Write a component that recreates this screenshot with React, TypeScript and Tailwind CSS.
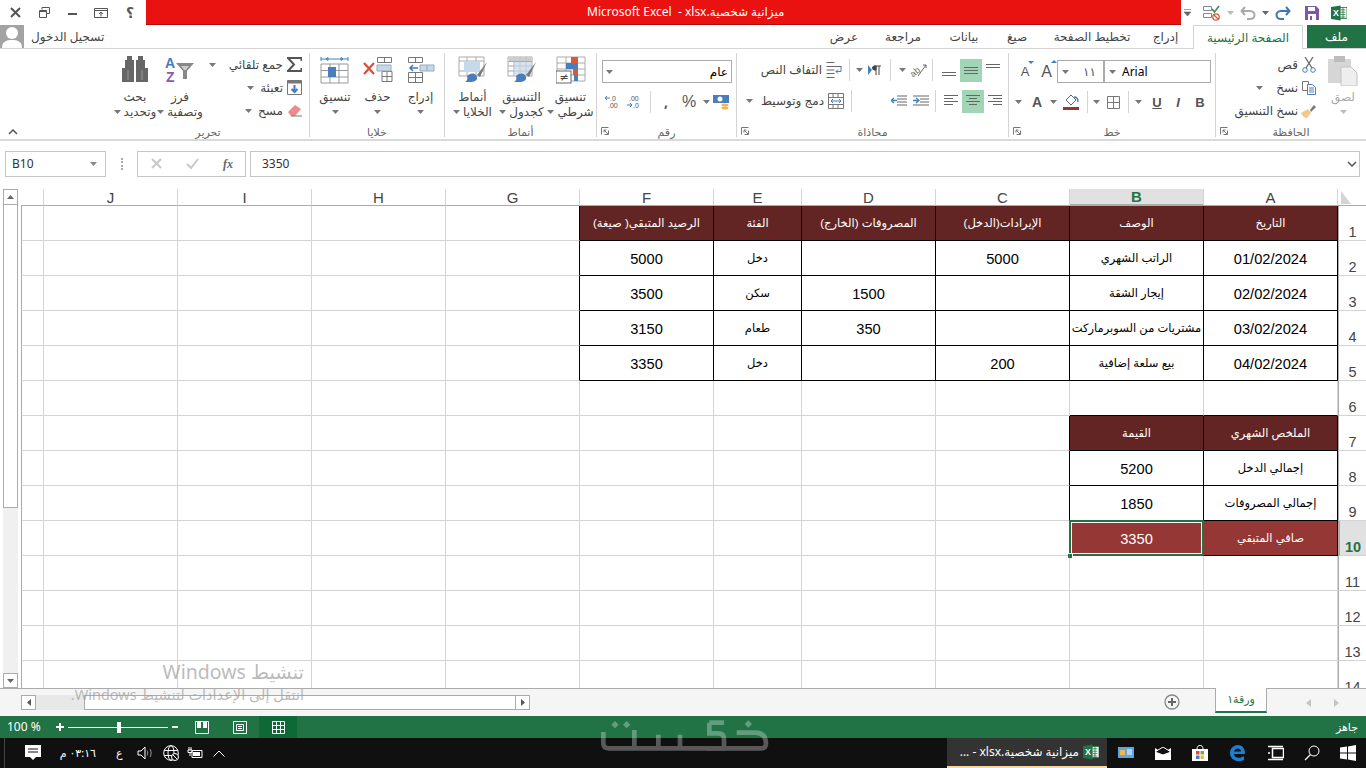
import type { ReactNode } from "react"

const Caret = ({ c = "#777" }: { c?: string }) => (
  <svg width="7" height="4" viewBox="0 0 7 4" className="shrink-0"><path d="M0 0h7L3.5 4z" fill={c} /></svg>
)

const Sep = ({ className = "" }: { className?: string }) => <div className={"w-px h-[22px] bg-[#d4d4d4] shrink-0 " + className} />

const Launcher = () => (
  <svg width="8" height="8" viewBox="0 0 8 8" className="shrink-0"><path d="M0.5 7.5V0.5H7.5M7.5 3.5V7.5H3.5M7 7L3 3M3 5.5V3H5.5" stroke="#777" fill="none" /></svg>
)

const ExcelIcon = ({ s = 20 }: { s?: number }) => (
  <svg width={s} height={s} viewBox="0 0 20 20">
    <rect x="7" y="3" width="13" height="14" fill="#fff" stroke="#217346" />
    <path d="M12 6h6M12 9h6M12 12h6M12 15h6M15 3v14" stroke="#217346" />
    <path d="M0 2.5L12 0.5V19.5L0 17.5z" fill="#217346" />
    <text x="2.6" y="14" fontSize="11" fontWeight="700" fill="#fff" fontFamily="Liberation Sans">X</text>
  </svg>
)

function Lines({ kind }: { kind: "top" | "mid" | "bot" | "l" | "c" | "r" }) {
  const d = {
    top: "M0 1.5h14M0 4.5h14",
    mid: "M0 4.5h14M0 7.5h14M0 10.5h14",
    bot: "M0 9.5h14M0 12.5h14",
    l: "M0 1.5h14M0 4.5h9M0 7.5h14M0 10.5h9",
    c: "M0 1.5h14M3 4.5h8M0 7.5h14M3 10.5h8",
    r: "M0 1.5h14M5 4.5h9M0 7.5h14M5 10.5h9",
  }[kind]
  return <svg width="14" height="14" viewBox="0 0 14 14"><path d={d} stroke="#666" fill="none" /></svg>
}

function Group({ className, label, launcher, children, last }: { className: string; label: string; launcher?: boolean; children: ReactNode; last?: boolean }) {
  return (
    <div className={"flex flex-col h-[84px] mt-[4px] shrink-0 border-[#d4d4d4] " + (last ? "" : "border-r ") + className}>
      <div className="h-[70px]">{children}</div>
      <div className="relative h-[14px] flex items-center justify-center text-[11px] text-[#666] leading-none pt-[2px]">
        {launcher && <span className="absolute left-[4px] top-[4px]"><Launcher /></span>}
        <span>{label}</span>
      </div>
    </div>
  )
}

function Big({ className, icon, lines, gray }: { className: string; icon: ReactNode; lines: string[]; gray?: boolean }) {
  return (
    <div className={"flex flex-col items-center shrink-0 " + className}>
      <div className="h-[34px] pt-[3px] flex justify-center">{icon}</div>
      <div className={"text-[12px] leading-[15px] whitespace-nowrap mt-[2px] " + (gray ? "text-[#aaa]" : "text-[#444]")}>{lines[0]}</div>
      {lines.length > 1 ? (
        <div className="flex items-center gap-[3px] text-[12px] leading-[15px] whitespace-nowrap text-[#444]"><Caret />{lines[1]}</div>
      ) : (
        <div className="h-[15px] flex items-center"><Caret c={gray ? "#bbb" : "#777"} /></div>
      )}
    </div>
  )
}

function Small({ text, icon, caret, gap = 4 }: { text: string; icon: ReactNode; caret?: number; gap?: number }) {
  return (
    <div className="h-[23px] flex items-center justify-end text-[12px] text-[#444] whitespace-nowrap">
      {caret !== undefined && <span className={caret === 13 ? "mr-[13px]" : "mr-[6px]"}><Caret /></span>}
      <span>{text}</span>
      <span className={gap === 4 ? "ml-[4px]" : "ml-[2px]"}>{icon}</span>
    </div>
  )
}

const ribbonTabs = [
  { t: "عرض", w: "w-[44px]" },
  { t: "مراجعة", w: "w-[74px]" },
  { t: "بيانات", w: "w-[48px]" },
  { t: "صيغ", w: "w-[58px]" },
  { t: "تخطيط الصفحة", w: "w-[92px]" },
  { t: "إدراج", w: "w-[55px]" },
]

function TitleBar() {
  return (
    <div className="h-[25px] flex shrink-0">
      <div className="w-[146px] flex items-center text-[#444]">
        <div className="w-[30px] flex justify-center"><svg width="11" height="11" viewBox="0 0 11 11"><path d="M1 1l9 9M10 1l-9 9" stroke="#555" strokeWidth="2" /></svg></div>
        <div className="w-[28px] flex justify-center"><svg width="11" height="11" viewBox="0 0 11 11"><path d="M3 2.5V.5h7.5v6H8M.5 3.5h7v7h-7zM.5 4.5h7" stroke="#555" fill="none" /></svg></div>
        <div className="w-[28px] flex justify-center"><div className="w-[9px] h-[2px] bg-[#555] mt-[2px]" /></div>
        <div className="w-[30px] flex justify-center"><svg width="14" height="10" viewBox="0 0 14 10"><path d="M.5.5h13v9H.5zM.5 2.5h13M7 8.5V4M5 6l2-2 2 2" stroke="#555" fill="none" /></svg></div>
        <div className="w-[28px] text-center text-[14px] font-bold text-[#555] leading-none">؟</div>
      </div>
      <div className="w-[1035px] h-[25px] bg-[#ea1111] border-b border-[#b50d0d] flex items-center text-white text-[12px] pl-[441px] whitespace-nowrap">
        <span>Microsoft Excel&nbsp; - xlsx.</span><span>ميزانية شخصية</span>
      </div>
      <div className="flex-1 flex items-center relative">
        <svg width="7" height="8" viewBox="0 0 7 8" className="ml-[3px]"><path d="M0 .5h7M0 3h7L3.5 7z" stroke="#666" fill="#666" strokeWidth=".6" /></svg>
        <svg width="18" height="16" viewBox="0 0 18 16" className="ml-[12px]">
          <path d="M.5 1.5h8v4h-8zM.5 8.500h8v4h-8z" stroke="#888" fill="none" />
          <path d="M9 4l2.5 3L16 1" stroke="#3b8e5a" strokeWidth="1.6" fill="none" />
          <circle cx="13" cy="12" r="3.2" stroke="#d9573b" fill="none" strokeWidth="1.3" /><path d="M11 10l4 4" stroke="#d9573b" strokeWidth="1.3" />
        </svg>
        <span className="ml-[6px]"><Caret c="#bbb" /></span>
        <svg width="16" height="14" viewBox="0 0 16 14" className="ml-[6px]"><path d="M5 1L1.5 5 5 9M2 5h8c6 0 6 8 0 8H7" stroke="#aaa" strokeWidth="2" fill="none" /></svg>
        <span className="ml-[6px]"><Caret c="#666" /></span>
        <svg width="16" height="14" viewBox="0 0 16 14" className="ml-[6px]"><path d="M11 1l3.5 4L11 9M14 5H6c-6 0-6 8 0 8h3" stroke="#3b78b5" strokeWidth="2" fill="none" /></svg>
        <svg width="14" height="14" viewBox="0 0 14 14" className="ml-[14px]"><path d="M0 0h11l3 3v11H0z" fill="#7e57a8" /><path d="M3 1h7v4H3z" fill="#fff" /><path d="M3 8h8v6H3z" fill="#fff" /><path d="M5 10h2v4H5z" fill="#7e57a8" /></svg>
        <span className="ml-[12px]"><ExcelIcon s={16} /></span>
      </div>
    </div>
  )
}

function TabRow() {
  return (
    <div className="h-[24px] flex border-b border-[#d4d4d4] shrink-0">
      <div className="w-[24px] h-[23px] bg-[#a3a3a3] overflow-hidden flex justify-center">
        <svg width="24" height="23" viewBox="0 0 24 23"><circle cx="12" cy="8" r="6" fill="#fff" /><path d="M2 23c0-7 5-8 10-8s10 1 10 8z" fill="#fff" /></svg>
      </div>
      <div className="text-[12px] text-[#444] ml-[7px] leading-[23px]">تسجيل الدخول</div>
      <div className="flex-1" />
      {ribbonTabs.map((t) => (
        <div key={t.t} className={t.w + " text-center text-[12px] text-[#444] leading-[23px]"}>{t.t}</div>
      ))}
      <div className="w-[110px] h-[24px] bg-white border border-b-0 border-[#d4d4d4] text-center text-[12px] text-[#217346] leading-[23px]">الصفحة الرئيسية</div>
      <div className="w-[4px]" />
      <div className="w-[59px] h-[23px] bg-[#217346] text-center text-white text-[12px] leading-[23px]">ملف</div>
    </div>
  )
}

function Ribbon() {
  return (
    <div className="h-[92px] flex border-b-2 border-[#d9d9d9] shrink-0">
      <div className="w-[107px] shrink-0 relative">
        <svg width="10" height="6" viewBox="0 0 10 6" className="absolute left-[8px] top-[80px]"><path d="M1 5l4-4 4 4" stroke="#555" strokeWidth="1.5" fill="none" /></svg>
      </div>

      <Group className="w-[203px]" label="تحرير">
        <div className="flex">
          <Big className="w-[50px] ml-[3px]" lines={["بحث", "وتحديد"]} icon={
            <svg width="28" height="26" viewBox="0 0 28 26"><path d="M6 0h5v4H6zM17 0h5v4h-5zM4 4h9v8H4zM15 4h9v8h-9zM1 12h12v14H1zM15 12h12v14H15z" fill="#666" /><path d="M7 14v10M21 14v10" stroke="#999" /></svg>
          } />
          <Big className="w-[40px]" lines={["فرز", "وتصفية"]} icon={
            <svg width="30" height="30" viewBox="0 0 30 30">
              <text x="0" y="12" fontSize="14" fontWeight="700" fill="#3f7fc1" fontFamily="Liberation Sans">A</text>
              <text x="1" y="26" fontSize="14" fontWeight="700" fill="#8a5aab" fontFamily="Liberation Sans">Z</text>
              <path d="M11 7h18l-7 8v8h-4v-8z" fill="#888" /><path d="M16 10h8l-3 4h-2z" fill="#ccc" />
            </svg>
          } />
          <div className="flex-1 pr-[7px]">
            <Small text="جمع تلقائي" caret={13} icon={<svg width="15" height="15" viewBox="0 0 15 15"><path d="M14.5 4V1H1l6 6.5L1 14h13.500V11" stroke="#555" strokeWidth="2" fill="none" /></svg>} />
            <Small text="تعبئة" caret={6} icon={<svg width="15" height="15" viewBox="0 0 15 15"><path d="M.5.5h14v14H.5z" stroke="#777" fill="#fff" /><path d="M.5.5h14v3H.5z" fill="#777" /><path d="M7.500 5v7M4.500 9l3 3 3-3" stroke="#3f7fc1" strokeWidth="2" fill="none" /></svg>} />
            <Small text="مسح" caret={6} icon={<svg width="15" height="13" viewBox="0 0 15 13"><path d="M1 8l7-7 6 4-6 7H4z" fill="#ef8a8a" /><path d="M4 12h11" stroke="#777" /></svg>} />
          </div>
        </div>
      </Group>

      <Group className="w-[135px]" label="خلايا">
        <div className="flex pl-[4px]">
          <Big className="w-[42px]" lines={["تنسيق"]} icon={
            <svg width="30" height="30" viewBox="0 0 30 30">
              <path d="M1 3h27M1 1v4M28 1v4M6 3l2-1.500v3zM23 3l-2-1.500v3z" stroke="#3f7fc1" fill="none" />
              <path d="M1 8h27v19H1zM1 14.500h27M1 21h27M10 8v19M19 8v19" stroke="#999" fill="none" />
              <rect x="8" y="11" width="8" height="10" fill="#4a7ebb" />
            </svg>
          } />
          <Big className="w-[43px]" lines={["حذف"]} icon={
            <svg width="30" height="28" viewBox="0 0 30 28">
              <path d="M14.500 1.500h14v5h-14zM21.500 1.500v5M19 15.500h10v10H19zM19 20.500h10M24 15.500v10" stroke="#777" fill="none" />
              <path d="M14 9h14v6H14z" fill="#c6d9ea" stroke="#9ab" />
              <path d="M1 7l10 11M11 7L1 18" stroke="#e04a3a" strokeWidth="2.200" />
            </svg>
          } />
          <Big className="w-[43px]" lines={["إدراج"]} icon={
            <svg width="28" height="28" viewBox="0 0 28 28">
              <path d="M1.500 1.500h14v5h-14zM8.500 1.500v5M1.500 16.500h14v10h-14zM1.500 21.500h14M8.500 16.500v10" stroke="#777" fill="none" />
              <path d="M13 9h14v6H13zM20 9v6" fill="#c6d9ea" stroke="#9ab" />
              <path d="M11 12H3M6 9l-3 3 3 3" stroke="#3f7fc1" strokeWidth="1.600" fill="none" />
            </svg>
          } />
        </div>
      </Group>

      <Group className="w-[152px]" label="أنماط">
        <div className="flex pl-[3px]">
          <Big className="w-[49px]" lines={["أنماط", "الخلايا"]} icon={
            <svg width="30" height="28" viewBox="0 0 30 28">
              <path d="M1 1h25v19H1zM1 5h25M1 15h25M9 1v19M18 1v19" stroke="#aaa" fill="none" /><rect x="6" y="5" width="16" height="11" fill="#c6d9ea" />
              <path d="M29 6L19 19l3 2z" fill="#7a7a7a" /><path d="M9 20c5-5 11-2 10 3-2 4-8 3-12 3 2-1 3-3 2-6z" fill="#4a7ebb" />
            </svg>
          } />
          <Big className="w-[49px]" lines={["التنسيق", "كجدول"]} icon={
            <svg width="30" height="28" viewBox="0 0 30 28">
              <path d="M1 1h24v19H1zM1 5.500h24M1 10h24M1 15h24M7 1v19M13 1v19M19 1v19" stroke="#aaa" fill="none" /><rect x="2" y="2" width="22" height="3" fill="#ccc" /><rect x="7" y="6" width="17" height="14" fill="#c6d9ea" opacity=".7" />
              <path d="M29 6L19 19l3 2z" fill="#7a7a7a" /><path d="M9 20c5-5 11-2 10 3-2 4-8 3-12 3 2-1 3-3 2-6z" fill="#4a7ebb" />
            </svg>
          } />
          <Big className="w-[49px]" lines={["تنسيق", "شرطي"]} icon={
            <svg width="30" height="28" viewBox="0 0 30 28">
              <path d="M1 1h28v24H1zM1 7h28M1 13h28M1 19h28M10 1v24M20 1v24" stroke="#aaa" fill="none" />
              <rect x="15" y="1" width="7" height="6" fill="#d9573b" /><rect x="10" y="7" width="12" height="6" fill="#4a7ebb" /><rect x="17" y="13" width="5" height="6" fill="#d9573b" /><rect x="18" y="19" width="4" height="6" fill="#4a7ebb" />
              <rect x="0" y="15" width="15" height="12" fill="#fff" stroke="#666" /><text x="3.500" y="25" fontSize="11" fill="#444" fontFamily="DejaVu Sans">≠</text>
            </svg>
          } />
        </div>
      </Group>

      <Group className="w-[140px]" label="رقم" launcher>
        <div className="pl-[5px] pt-[7px]">
          <div className="w-[130px] h-[23px] border border-[#ababab] flex items-center justify-between px-[3px] text-[12px] text-black">
            <Caret /><span>عام</span>
          </div>
          <div className="flex items-center mt-[7px] h-[23px]">
            <svg width="16" height="14" viewBox="0 0 16 14" className="ml-[3px]"><text x="5" y="6" fontSize="7" fill="#555" fontFamily="Liberation Sans">.0</text><text x="3" y="13" fontSize="7" fill="#555" fontFamily="Liberation Sans">.00</text><path d="M5 3H0M2 1L0 3l2 2" stroke="#3f7fc1" fill="none" /></svg>
            <svg width="16" height="14" viewBox="0 0 16 14" className="ml-[6px]"><text x="2" y="6" fontSize="7" fill="#555" fontFamily="Liberation Sans">.00</text><text x="6" y="13" fontSize="7" fill="#555" fontFamily="Liberation Sans">.0</text><path d="M0 10h5M3 8l2 2-2 2" stroke="#3f7fc1" fill="none" /></svg>
            <Sep className="ml-[7px]" />
            <span className="ml-[13px] w-[4px] text-[14px] font-bold text-[#555] leading-none">,</span>
            <span className="ml-[14px] text-[16px] text-[#555] leading-none font-['Liberation_Sans']">%</span>
            <span className="ml-[7px]"><Caret /></span>
            <svg width="16" height="16" viewBox="0 0 16 16" className="ml-[3px]"><rect x="0" y="1" width="16" height="8" fill="#4a7ebb" /><circle cx="7" cy="5" r="2.500" fill="#fff" /><ellipse cx="12" cy="11" rx="3.500" ry="1.500" fill="#f0b84c" /><ellipse cx="12" cy="14" rx="3.500" ry="1.500" fill="#f0b84c" /></svg>
          </div>
        </div>
      </Group>

      <Group className="w-[272px]" label="محاذاة" launcher>
        <div className="pt-[5px]">
          <div className="flex items-center h-[24px]">
            <span className="ml-[12px] w-[73px] text-right text-[12px] text-[#444] whitespace-nowrap">التفاف النص</span>
            <svg width="16" height="16" viewBox="0 0 16 16" className="ml-[4px]"><path d="M.5.5h8M.5 4.500h15M.5 15.500h8M.5 11.500h8M.5 8h8" stroke="#666" /><path d="M15 4.500v5H10M12 7.500l-2 2 2 2" stroke="#3f7fc1" fill="none" /></svg>
            <Sep className="ml-[7px]" />
            <span className="ml-[6px]"><Caret /></span>
            <svg width="13" height="10" viewBox="0 0 13 10" className="ml-[5px]"><path d="M0 0l4 5-4 5z" fill="#3f7fc1" /><path d="M8 1H6.500a2 2 0 000 4H8zM8 1v9M11 1v9M6 1h7" stroke="#444" fill="#444" /></svg>
            <Sep className="ml-[9px]" />
            <span className="ml-[8px]"><Caret /></span>
            <svg width="18" height="16" viewBox="0 0 18 16" className="ml-[3px]"><text x="1" y="13" fontSize="9" fill="#666" fontFamily="Liberation Sans" transform="rotate(-40 6 10)">ab</text><path d="M9 14L17 3M14 3h3v3" stroke="#666" fill="none" /></svg>
            <Sep className="ml-[5px]" />
            <span className="ml-[9px]"><Lines kind="bot" /></span>
            <span className="ml-[4px] w-[22px] h-[23px] bg-[#a2d5b6] flex items-center justify-center"><Lines kind="mid" /></span>
            <span className="ml-[4px]"><Lines kind="top" /></span>
          </div>
          <div className="flex items-center h-[24px] mt-[7px]">
            <span className="ml-[9px]"><Caret /></span>
            <span className="ml-[5px] w-[66px] text-right text-[12px] text-[#444] whitespace-nowrap">دمج وتوسيط</span>
            <svg width="16" height="16" viewBox="0 0 16 16" className="ml-[4px]"><path d="M.5.5h15v15H.5zM.5 4.500h15M.5 11.500h15M5 .5v4M10 .5v4M5 11.500v4M10 11.500v4" stroke="#777" fill="none" /><path d="M3 8h10M5 6L3 8l2 2M11 6l2 2-2 2" stroke="#3f7fc1" fill="none" /></svg>
            <Sep className="ml-[7px]" />
            <svg width="16" height="12" viewBox="0 0 16 12" className="ml-[39px]"><path d="M6 1h10M6 4h10M6 7h10M6 10h10" stroke="#666" /><path d="M6 5.500H0M3 3L0 5.500 3 8" stroke="#3f7fc1" strokeWidth="1.300" fill="none" /></svg>
            <svg width="16" height="12" viewBox="0 0 16 12" className="ml-[6px]"><path d="M0 1h16M7 4h9M7 7h9M0 10h16" stroke="#666" /><path d="M0 5.500h6M3 3l3 2.500L3 8" stroke="#3f7fc1" strokeWidth="1.300" fill="none" /></svg>
            <Sep className="ml-[6px]" />
            <span className="ml-[8px]"><Lines kind="l" /></span>
            <span className="ml-[4px] w-[22px] h-[23px] bg-[#a2d5b6] flex items-center justify-center"><Lines kind="c" /></span>
            <span className="ml-[4px]"><Lines kind="r" /></span>
          </div>
        </div>
      </Group>

      <Group className="w-[207px]" label="خط" launcher>
        <div className="pt-[7px]">
          <div className="flex items-center h-[23px] pl-[5px]">
            <div className="w-[22px] flex justify-center items-end text-[#555] text-[13px] font-['Liberation_Sans'] relative"><span>A</span><span className="absolute top-[-1px] right-[2px] w-0 h-0 border-x-[3px] border-x-transparent border-t-[3px] border-t-[#3f7fc1]" /></div>
            <div className="w-[21px] flex justify-center items-end text-[#555] text-[16px] font-['Liberation_Sans'] relative"><span>A</span><span className="absolute top-[0px] right-[0px] w-0 h-0 border-x-[3px] border-x-transparent border-b-[3px] border-b-[#3f7fc1]" /></div>
            <div className="w-[154px] h-[23px] border border-[#ababab] flex">
              <div className="w-[47px] border-r-2 border-[#ababab] flex items-center justify-between px-[4px] text-[12px] text-[#555]"><Caret /><span className="pr-[3px]">١١</span></div>
              <div className="flex-1 flex items-center pl-[4px] gap-[6px] text-[12px] text-black font-['Noto_Sans']"><Caret />Arial</div>
            </div>
          </div>
          <div className="flex items-center h-[24px] mt-[7px] text-[#555]">
            <span className="ml-[6px]"><Caret /></span>
            <span className="ml-[8px] w-[14px] text-center text-[14px] font-bold font-['Liberation_Sans'] leading-none">A</span>
            <span className="ml-[6px]"><Caret /></span>
            <svg width="16" height="16" viewBox="0 0 16 16" className="ml-[6px]"><path d="M3 6l5-5 5 5-5 5z" fill="#fff" stroke="#666" /><path d="M11 3c3 0 4 2 4 5" stroke="#3f7fc1" strokeWidth="1.500" fill="none" /><rect x="0" y="13" width="16" height="3" fill="#953735" /></svg>
            <Sep className="ml-[8px]" />
            <span className="ml-[5px]"><Caret /></span>
            <svg width="13" height="13" viewBox="0 0 13 13" className="ml-[7px]"><path d="M.5.5h12v12H.5zM.5 6.500h12M6.500.5v12" stroke="#777" fill="none" /></svg>
            <Sep className="ml-[8px]" />
            <span className="ml-[6px]"><Caret /></span>
            <span className="ml-[9px] w-[12px] text-center text-[13px] font-bold underline font-['Liberation_Sans'] leading-none">U</span>
            <span className="ml-[9px] w-[12px] text-center text-[13px] font-bold italic font-['Liberation_Sans'] leading-none">I</span>
            <span className="ml-[10px] w-[12px] text-center text-[13px] font-bold font-['Liberation_Sans'] leading-none">B</span>
          </div>
        </div>
      </Group>

      <Group className="w-[150px]" label="الحافظة" launcher last>
        <div className="flex">
          <div className="w-[100px]">
            <Small text="قص" icon={<svg width="14" height="16" viewBox="0 0 14 16"><path d="M3 0l7 11M11 0L4 11" stroke="#666" strokeWidth="1.300" /><circle cx="3" cy="13" r="2.300" stroke="#3f7fc1" fill="none" /><circle cx="11" cy="13" r="2.300" stroke="#3f7fc1" fill="none" /></svg>} />
            <Small text="نسخ" caret={13} icon={<svg width="14" height="14" viewBox="0 0 14 14"><path d="M.5.5h6v9h-6z" stroke="#777" fill="#fff" /><path d="M5.500 3.500h5l3 3v7h-8z" stroke="#4a7ebb" fill="#fff" /><path d="M7 7h5M7 9h5M7 11h5" stroke="#4a7ebb" /></svg>} />
            <Small text="نسخ التنسيق" gap={2} icon={<svg width="16" height="14" viewBox="0 0 16 14"><path d="M10 6l4-5 2 2-5 5z" fill="#777" /><path d="M1 9l7-4 3 4-4 5c-2 0-5-2-6-5z" fill="#f4c78b" /></svg>} />
          </div>
          <div className="w-[50px] flex justify-center pl-[4px]">
            <Big className="w-[40px]" gray lines={["لصق"]} icon={
              <svg width="30" height="30" viewBox="0 0 30 30"><rect x="0" y="3" width="23" height="24" rx="1" fill="#d6d6d6" /><rect x="6" y="0" width="11" height="6" fill="#bcbcbc" /><path d="M13 11h10l6 6v13H13z" fill="#eee" stroke="#c4c4c4" /></svg>
            } />
          </div>
        </div>
      </Group>
    </div>
  )
}

function FormulaBar() {
  return (
    <div className="h-[27px] mt-[9px] flex items-center shrink-0 text-[12px] text-[#333]">
      <div className="w-[101px] h-[26px] ml-[5px] border border-[#c6c6c6] flex items-center justify-between px-[6px]">
        <span className="font-['Noto_Sans']">B10</span><span className="pr-[2px]"><Caret c="#888" /></span>
      </div>
      <div className="w-[31px] flex justify-center"><div className="w-[2px] h-[12px] border-l-2 border-dotted border-[#aaa]" /></div>
      <div className="w-[109px] h-[26px] border border-[#c6c6c6] flex items-center">
        <svg width="11" height="11" viewBox="0 0 11 11" className="ml-[13px]"><path d="M1 1l9 9M10 1l-9 9" stroke="#c8c8c8" strokeWidth="2" /></svg>
        <svg width="13" height="11" viewBox="0 0 13 11" className="ml-[24px]"><path d="M1 6l4 4 7-9" stroke="#c8c8c8" strokeWidth="2" fill="none" /></svg>
        <span className="ml-[24px] italic font-bold text-[#666] text-[12px] font-['Liberation_Serif']">fx</span>
      </div>
      <div className="w-[1110px] h-[26px] ml-[4px] border border-[#c6c6c6] flex items-center justify-between pl-[11px] pr-[2px]">
        <span className="font-['Noto_Sans']">3350</span>
        <svg width="10" height="6" viewBox="0 0 10 6"><path d="M1 1l4 4 4-4" stroke="#555" strokeWidth="1.500" fill="none" /></svg>
      </div>
    </div>
  )
}

const colNames = ["", "J", "I", "H", "G", "F", "E", "D", "C", "B", "A"]

const data: Record<number, Record<string, string>> = {
  1: { A: "التاريخ", B: "الوصف", C: "الإيرادات(الدخل)", D: "المصروفات (الخارج)", E: "الفئة", F: "الرصيد المتبقي( صيغة)" },
  2: { A: "01/02/2024", B: "الراتب الشهري", C: "5000", E: "دخل", F: "5000" },
  3: { A: "02/02/2024", B: "إيجار الشقة", D: "1500", E: "سكن", F: "3500" },
  4: { A: "03/02/2024", B: "مشتريات من السوبرماركت", D: "350", E: "طعام", F: "3150" },
  5: { A: "04/02/2024", B: "بيع سلعة إضافية", C: "200", E: "دخل", F: "3350" },
  7: { A: "الملخص الشهري", B: "القيمة" },
  8: { A: "إجمالي الدخل", B: "5200" },
  9: { A: "إجمالي المصروفات", B: "1850" },
  10: { A: "صافي المتبقي", B: "3350" },
}

function inTable(c: string, r: number) {
  if (r >= 1 && r <= 5) return ["A", "B", "C", "D", "E", "F"].includes(c)
  if (r >= 7 && r <= 10) return c === "A" || c === "B"
  return false
}

function Cell({ c, i, r }: { c: string; i: number; r: number }) {
  const right = colNames[i + 1] ?? ""
  const blackR = inTable(c, r) || inTable(right, r)
  const blackB = inTable(c, r) || inTable(c, r + 1)
  const text = data[r]?.[c] ?? ""
  const head = r === 1 || r === 7
  const isNum = /^[0-9/]+$/.test(text)
  let bg = "bg-white text-black"
  if (inTable(c, r) && head) bg = "bg-[#632523] text-white"
  if (inTable(c, r) && r === 10) bg = "bg-[#953735] text-white"
  return (
    <div className={"relative flex items-center justify-center whitespace-nowrap overflow-visible border-r border-b " + bg + " " + (blackR ? "border-r-black " : "border-r-[#d4d4d4] ") + (blackB ? "border-b-black " : "border-b-[#d4d4d4] ") + (isNum ? "text-[14.67px] pt-[1px]" : "text-[11.5px] pt-[2px]")}>
      {text}
      {c === "B" && r === 10 && (
        <>
          <span className="absolute -left-[1px] -top-[1px] w-[135px] h-[36px] border-2 border-[#217346] outline outline-1 -outline-offset-3 outline-white" />
          <span className="absolute -left-[2px] -bottom-[3px] w-[5px] h-[5px] bg-[#217346] border-t border-r border-white z-10" />
        </>
      )}
    </div>
  )
}

function Sheet() {
  const rows = Array.from({ length: 14 }, (_, k) => k + 1)
  return (
    <div className="h-[499px] mt-[12px] flex shrink-0 font-['Liberation_Sans','DejaVu_Sans',sans-serif]">
      <div className="w-[21px] shrink-0 pl-[3px] flex">
        <div className="w-[15px] h-full flex flex-col bg-[#f0f0f0]">
          <div className="h-[16px] border border-[#ababab] bg-white flex items-center justify-center"><svg width="7" height="4" viewBox="0 0 7 4"><path d="M0 4h7L3.500 0z" fill="#666" /></svg></div>
          <div className="h-[303px] border-x border-b border-[#ababab] bg-white" />
          <div className="flex-1" />
          <div className="h-[15px] border border-[#ababab] bg-white flex items-center justify-center"><Caret c="#666" /></div>
        </div>
      </div>
      <div className="w-[1345px] h-[499px] overflow-hidden grid grid-cols-[23px_134px_134px_134px_134px_134px_88px_134px_134px_134px_134px_28px] grid-rows-[17px_repeat(14,35px)]">
        {colNames.map((c) => (
          <div key={"h" + c} className={"flex items-center justify-center border-r border-[#d4d4d4] border-b border-b-[#ababab] text-[15px] leading-none " + (c === "B" ? "bg-[#e1e1e1] border-b-2 border-b-[#217346] font-bold text-[#217346]" : "text-[#444]")}>{c}</div>
        ))}
        <div className="border-b border-b-[#ababab] flex items-center pl-[3px]"><svg width="10" height="13" viewBox="0 0 10 13"><path d="M0 0l10 13H0z" fill="#d4d4d4" /></svg></div>
        {rows.map((r) => (
          <div key={r} className="contents">
            {colNames.map((c, i) => (i === 0 ? <div key="x" className="border-l border-l-[#ababab] border-r border-r-[#d4d4d4] border-b border-b-[#d4d4d4]" /> : <Cell key={c} c={c} i={i} r={r} />))}
            <div className={"flex items-end justify-center border-b border-[#d4d4d4] border-l border-l-[#ababab] text-[14.5px] leading-[15px] " + (r === 10 ? "bg-[#e1e1e1] font-bold text-[#217346] border-l-2 border-l-[#217346]" : "text-[#444]")}>{r}</div>
          </div>
        ))}
      </div>
    </div>
  )
}

function SheetTabs() {
  return (
    <div className="h-[28px] bg-[#f5f5f5] border-t border-[#ababab] flex shrink-0 font-['DejaVu_Sans',sans-serif]">
      <div className="ml-[21px] mt-[6px] h-[15px] flex">
        <div className="w-[15px] h-[15px] border border-[#ababab] bg-white flex items-center justify-center"><svg width="4" height="7" viewBox="0 0 4 7"><path d="M4 0v7L0 3.500z" fill="#555" /></svg></div>
        <div className="w-[48px] h-[15px] bg-[#e8e8e8]" />
        <div className="w-[432px] h-[15px] border border-[#ababab] bg-white" />
        <div className="w-[14px] h-[15px] border border-l-0 border-[#ababab] bg-white flex items-center justify-center"><svg width="4" height="7" viewBox="0 0 4 7"><path d="M0 0v7l4-3.500z" fill="#555" /></svg></div>
      </div>
      <div className="ml-[634px] mt-[5px]">
        <svg width="16" height="16" viewBox="0 0 16 16"><circle cx="8" cy="8" r="7" stroke="#888" strokeWidth="1.300" fill="none" /><path d="M8 4v8M4 8h8" stroke="#666" strokeWidth="2" /></svg>
      </div>
      <div className="w-[52px] h-[25px] ml-[35px] -mt-px bg-white border-x border-[#ababab] border-b-2 border-b-[#217346] text-center text-[11px] text-[#217346] leading-[24px]">ورقة١</div>
      <svg width="5" height="8" viewBox="0 0 5 8" className="ml-[39px] mt-[10px]"><path d="M5 0v8L0 4z" fill="#c4c4c4" /></svg>
      <svg width="5" height="8" viewBox="0 0 5 8" className="ml-[23px] mt-[10px]"><path d="M0 0v8l5-4z" fill="#c4c4c4" /></svg>
    </div>
  )
}

function StatusBar() {
  return (
    <div className="h-[22px] bg-[#217346] flex items-center shrink-0 text-white text-[12px] font-['Noto_Sans','DejaVu_Sans',sans-serif]">
      <span className="ml-[7px] w-[33px] whitespace-nowrap">100 %</span>
      <svg width="8" height="8" viewBox="0 0 8 8" className="ml-[16px]"><path d="M4 0v8M0 4h8" stroke="#fff" strokeWidth="2" /></svg>
      <div className="ml-[4px] w-[100px] h-px bg-white relative"><span className="absolute left-[49px] -top-[5px] w-[4px] h-[11px] bg-white" /></div>
      <div className="ml-[4px] w-[6px] h-[2px] bg-white" />
      <svg width="14" height="13" viewBox="0 0 14 13" className="ml-[17px]"><path d="M.5.5h13v12H.5z" stroke="#fff" fill="none" /><path d="M2 1h4v6H2zM8 1h4v6H8z" fill="#fff" /></svg>
      <svg width="14" height="13" viewBox="0 0 14 13" className="ml-[24px]"><path d="M.5.5h13v12H.5zM3.500 3.500h7v6h-7zM5 5.500h4M5 7.500h4" stroke="#fff" fill="none" /></svg>
      <div className="ml-[12px] w-[38px] h-[22px] bg-[#0f6937] flex items-center justify-center">
        <svg width="13" height="13" viewBox="0 0 13 13"><path d="M.5.5h12v12H.5zM.5 4.500h12M.5 8.500h12M4.500.5v12M8.500.5v12" stroke="#fff" fill="none" /></svg>
      </div>
      <div className="flex-1" />
      <span className="mr-[8px] text-[11px]">جاهز</span>
    </div>
  )
}

function Taskbar() {
  return (
    <div className="h-[30px] bg-[#101010] flex items-center shrink-0 text-white font-['Noto_Sans','DejaVu_Sans',sans-serif]">
      <div className="ml-[4px] w-px h-[30px] bg-[#444]" />
      <svg width="16" height="16" viewBox="0 0 16 16" className="ml-[20px]"><path d="M0 0h16v12h-5l-3 3-3-3H0z" fill="#fff" /><path d="M3 4h10M3 7h10" stroke="#101010" /></svg>
      <span dir="rtl" className="ml-[19px] w-[36px] text-[11px] whitespace-nowrap text-center">٠٣:١٦ م</span>
      <span className="ml-[20px] w-[8px] text-[11px]">ع</span>
      <svg width="16" height="14" viewBox="0 0 16 14" className="ml-[13px]"><path d="M1 5h3l4-4v12L4 9H1z" stroke="#fff" fill="none" /><path d="M10 4.500c1 1.500 1 3.500 0 5M13 3c1.500 2.500 1.500 5.500 0 8" stroke="#999" fill="none" /></svg>
      <svg width="16" height="16" viewBox="0 0 16 16" className="ml-[10px]"><circle cx="8" cy="8" r="7.300" stroke="#fff" fill="none" /><ellipse cx="8" cy="8" rx="3" ry="7.300" stroke="#fff" fill="none" /><path d="M1 5.500h14M1 10.500h14" stroke="#fff" /><circle cx="12" cy="12" r="3.500" fill="#101010" stroke="#fff" /><path d="M10 10l4 4" stroke="#fff" /></svg>
      <svg width="16" height="12" viewBox="0 0 16 12" className="ml-[8px]"><path d="M5 3.500h10v7H5z" stroke="#fff" fill="none" /><rect x="6" y="5" width="7" height="4" fill="#fff" /><path d="M2 0v3M4 0v3M1 3h4v2.500H1zM3 5.500V9" stroke="#fff" fill="none" /></svg>
      <svg width="12" height="7" viewBox="0 0 12 7" className="ml-[10px]"><path d="M.5 6.500L6 1l5.500 5.500" stroke="#fff" fill="none" /></svg>
      <div className="flex-1" />
      <div className="w-[160px] h-[30px] bg-[#333] border-b-2 border-[#f7d6a0] flex items-center justify-end pr-[8px] text-[12px]">
        <span dir="rtl" className="mr-[4px] whitespace-nowrap">ميزانية شخصية.xlsx - ...</span>
        <ExcelIcon s={16} />
      </div>
      <svg width="16" height="12" viewBox="0 0 16 12" className="ml-[11px]"><rect width="16" height="11" fill="#5ea6e0" /><rect x="2" y="3" width="5" height="5" fill="#f0b84c" /><path d="M9 3h5M9 5h5M9 7h5" stroke="#fff" /></svg>
      <svg width="16" height="13" viewBox="0 0 16 13" className="ml-[21px]"><path d="M0 0l8 5 8-5v13H0z" fill="#fff" transform="translate(0 1)" /><path d="M0 5l8-5 8 5-8 3z" fill="#101010" stroke="#fff" /></svg>
      <svg width="16" height="16" viewBox="0 0 16 16" className="ml-[21px]"><path d="M5 4c0-5 6-5 6 0" stroke="#fff" fill="none" /><rect y="4" width="16" height="12" fill="#fff" /><rect x="4" y="6" width="3.500" height="3.500" fill="#e04a3a" /><rect x="8.500" y="6" width="3.500" height="3.500" fill="#6cb33f" /><rect x="4" y="10.500" width="3.500" height="3.500" fill="#3f7fc1" /><rect x="8.500" y="10.500" width="3.500" height="3.500" fill="#f0b84c" /></svg>
      <svg width="16" height="16" viewBox="0 0 16 16" className="ml-[21px]"><path d="M1 8c0-5 4-8 8-8 4 0 7 3 7 9H5c0 4 6 5 10 2v4c-6 3-14 0-14-7zM5 6.500h7c0-4-6-4-7 0z" fill="#1c7fd6" /></svg>
      <svg width="16" height="16" viewBox="0 0 16 16" className="ml-[23px]"><path d="M4.500 3.500h11v9h-11zM0 1.500h15M0 14.500h15M0 8h2" stroke="#fff" fill="none" strokeWidth="1.500" /></svg>
      <svg width="16" height="16" viewBox="0 0 16 16" className="ml-[20px]"><circle cx="10" cy="6" r="5" stroke="#fff" fill="none" /><path d="M6.500 9.500L1 15" stroke="#fff" strokeWidth="1.300" /></svg>
      <svg width="16" height="16" viewBox="0 0 16 16" className="ml-[20px] mr-[10px]"><path d="M0 2.500L7 1.500V7.500H0zM8 1.400L16 0V7.500H8zM0 8.500H7V14.500L0 13.500zM8 8.500H16V16L8 14.600z" fill="#fff" /></svg>
    </div>
  )
}

export default function App() {
  return (
    <div className="relative w-[1366px] h-[768px] overflow-hidden bg-white flex flex-col font-['Noto_Sans','DejaVu_Sans',sans-serif]">
      <TitleBar />
      <TabRow />
      <Ribbon />
      <FormulaBar />
      <Sheet />
      <SheetTabs />
      <StatusBar />
      <Taskbar />

      {/* windows activation watermark */}
      <div dir="rtl" className="absolute left-[60px] top-[658px] w-[244px] text-[#9f9f9f] opacity-70 pointer-events-none">
        <div className="text-[19.5px] leading-[27px] whitespace-nowrap">تنشيط Windows</div>
        <div className="text-[14.5px] leading-[18px] whitespace-nowrap">انتقل إلى الإعدادات لتنشيط Windows.</div>
      </div>

      {/* khamsat logo */}
      <svg width="170" height="36" viewBox="0 0 510 108" className="absolute left-[600px] top-[718px] pointer-events-none opacity-30">
        <g stroke="#fff" strokeWidth="14" fill="none">
          <path d="M10 42V76Q10 91 26 91H484Q498 91 498 76Q498 44 464 44H410" />
          <path d="M103 36V91M175 50V91M240 50V91" />
          <path d="M328 14H372M328 14V46H354Q372 46 372 62V91H320" />
        </g>
        <path d="M45 9l11 11-11 11-11-11zM80 9l11 11-11 11-11-11zM445 7l11 11-11 11-11-11z" fill="#fff" />
      </svg>
    </div>
  )
}
